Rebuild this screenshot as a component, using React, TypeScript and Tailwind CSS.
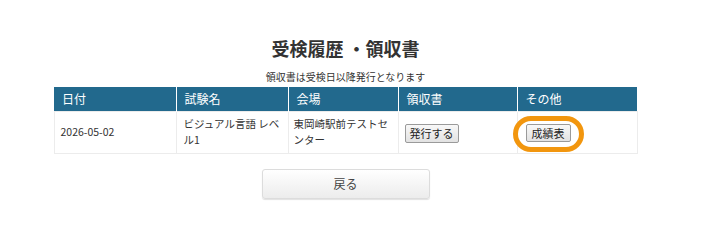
const rows = [
  {
    date: "2026-05-02",
    exam: "ビジュアル言語 レベル1",
    venue: "東岡崎駅前テストセンター",
  },
];

const headers = ["日付", "試験名", "会場", "領収書", "その他"];
const widths = ["w-[122px]", "w-[112px]", "w-[110px]", "w-[119px]", "w-[120px]"];

const App = () => {
  return (
    <div
      className="h-[230px] w-[691px] bg-white text-[#333]"
      style={{ fontFamily: '"Noto Sans CJK JP", "Noto Sans", sans-serif' }}
    >
      <div className="flex flex-col items-center pt-[36px]">
        <h1 className="text-[18px] font-bold leading-[24px] text-[#333]">
          受検履歴 ・領収書
        </h1>
        <p className="mt-[10px] text-[10px] leading-[13px] text-[#333]">
          領収書は受検日以降発行となります
        </p>
        <table className="mt-[4px] w-[583px] table-fixed border-collapse text-left">
          <thead>
            <tr className="bg-[#22698d] text-white">
              {headers.map((h, i) => (
                <th
                  key={h}
                  className={`${widths[i]} h-[24px] border-l border-white px-[8px] text-[12px] font-normal leading-[16px] first:border-l-0`}
                >
                  {h}
                </th>
              ))}
            </tr>
          </thead>
          <tbody>
            {rows.map((r) => (
              <tr key={r.date} className="h-[42px] text-[10.5px] leading-[16px]">
                <td className="border border-[#ececec] px-[6px] align-middle">
                  {r.date}
                </td>
                <td className="border border-[#ececec] pl-[7px] pr-[4px] align-middle">
                  {r.exam}
                </td>
                <td className="border border-[#ececec] px-[5px] align-middle">
                  {r.venue}
                </td>
                <td className="border border-[#ececec] px-[6px] pt-[2px] align-middle">
                  <button className="h-[19px] rounded-[2px] border border-[#9a9a9a] bg-gradient-to-b from-[#f8f8f8] to-[#e2e2e2] px-[4px] text-[11px] leading-[16px] text-[#222]">
                    発行する
                  </button>
                </td>
                <td className="border border-[#ececec] px-[8px] pt-[2px] align-middle">
                  <span className="relative inline-block">
                    <button className="h-[18px] rounded-[2px] border border-[#9a9a9a] bg-gradient-to-b from-[#f8f8f8] to-[#e2e2e2] px-[5px] text-[11px] leading-[15px] text-[#222]">
                      成績表
                    </button>
                    <span className="pointer-events-none absolute -bottom-[10px] -left-[13px] -right-[13px] -top-[8px] rounded-full border-[5px] border-[#f2960e]" />
                  </span>
                </td>
              </tr>
            ))}
          </tbody>
        </table>
        <button className="mt-[15px] h-[30px] w-[168px] rounded-[3px] border border-[#dcdcdc] bg-gradient-to-b from-white to-[#ececec] text-[12px] text-[#444] shadow-[0_1px_1px_rgba(0,0,0,0.12)]">
          戻る
        </button>
      </div>
    </div>
  );
};

export default App;
